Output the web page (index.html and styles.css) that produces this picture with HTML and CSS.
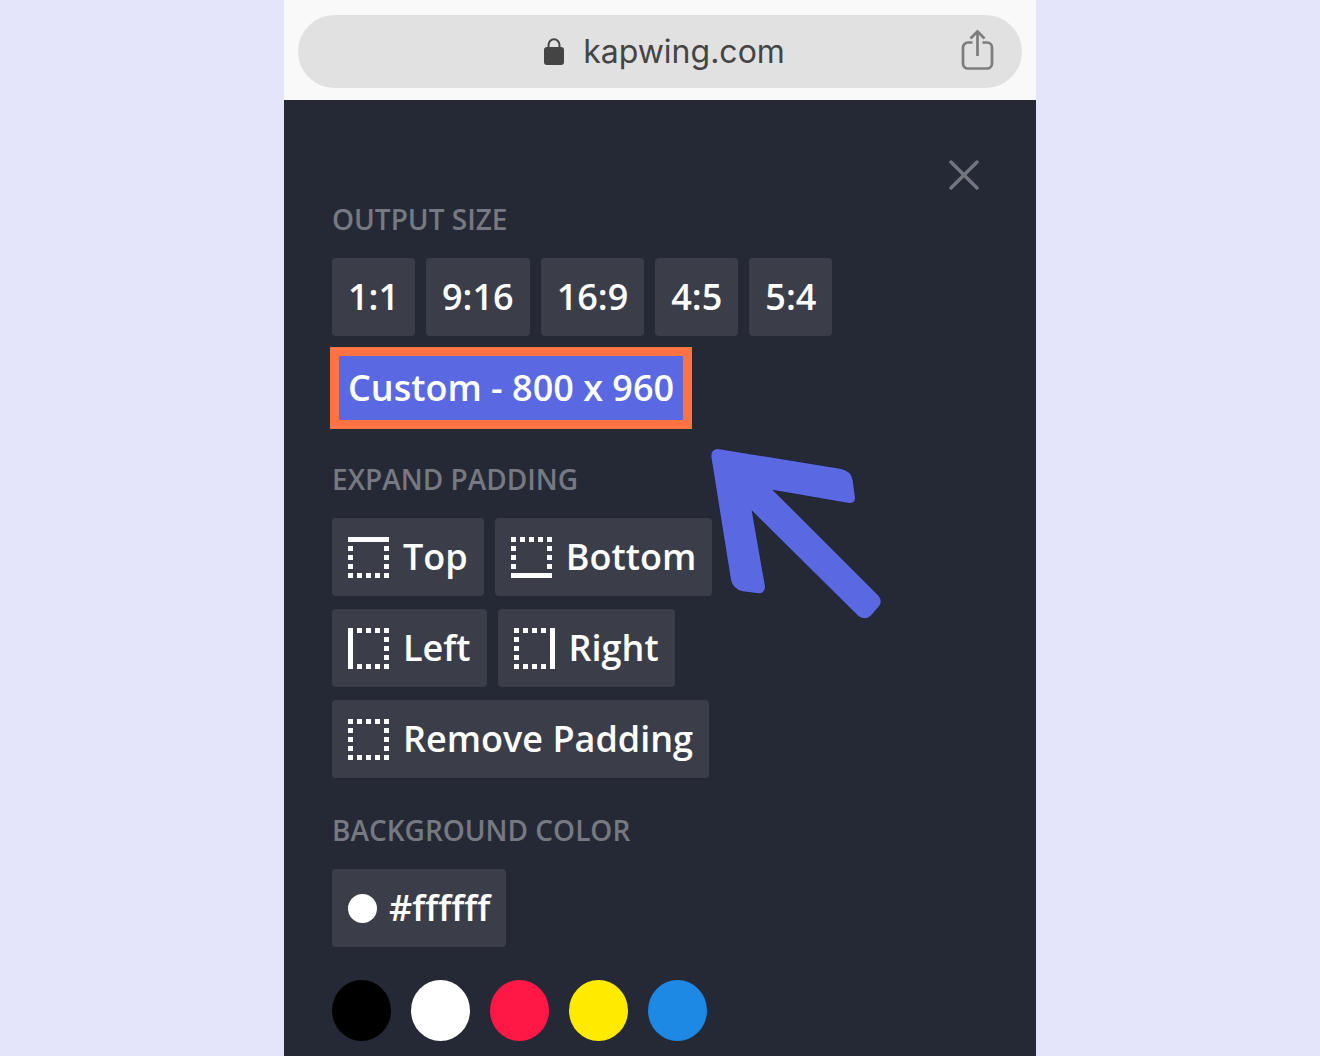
FILE: index.html
```html
<!DOCTYPE html>
<html lang="en">
<head>
<meta charset="utf-8">
<meta name="viewport" content="width=device-width, initial-scale=1">
<title>Kapwing</title>
<link rel="stylesheet" href="styles.css">
</head>
<body>
<svg class="defs" aria-hidden="true">
  <defs>
    <g id="corners">
      <path d="M0 0h5v5H0zM36 0h5v5h-5zM0 36h5v5H0zM36 36h5v5h-5z"/>
    </g>
    <path id="dots-h" d="M9 0h5v5H9zM18 0h5v5h-5zM27 0h5v5h-5z"/>
    <path id="dots-v" d="M0 9h5v5H0zM0 18h5v5H0zM0 27h5v5H0z"/>
  </defs>
</svg>
<div class="phone">
  <header class="browser">
    <div class="address">
      <button class="url" type="button">
        <svg class="lock" viewBox="0 0 22 28" aria-hidden="true">
          <path d="M5.500 10V7a5.500 5.700 0 0 1 11 0v3" fill="none" stroke="currentColor" stroke-width="2"/>
          <rect x="1" y="9" width="20" height="18" rx="3" fill="currentColor"/>
        </svg>
        <span>kapwing.com</span>
      </button>
      <button class="share" type="button" aria-label="Share">
        <svg viewBox="0 0 34 42" fill="none" stroke="currentColor" stroke-width="2.700" aria-hidden="true">
          <path d="M12.500 13.500H8a5 5 0 0 0-5 5v16a5 5 0 0 0 5 5h19a5 5 0 0 0 5-5v-16a5 5 0 0 0-5-5h-4.500M17.500 27V3M10.500 9.500l7-7 7 7"/>
        </svg>
      </button>
    </div>
  </header>
  <main class="panel">
    <button class="close" type="button" aria-label="Close">
      <svg viewBox="0 0 30 30" fill="none" stroke="currentColor" stroke-width="3.500" stroke-linecap="round" aria-hidden="true"><path d="M2 2l26 26M28 2L2 28"/></svg>
    </button>
    <section>
      <h2>OUTPUT SIZE</h2>
      <div class="rows">
        <div class="row">
          <button class="chip" type="button">1:1</button>
          <button class="chip" type="button">9:16</button>
          <button class="chip" type="button">16:9</button>
          <button class="chip" type="button">4:5</button>
          <button class="chip" type="button">5:4</button>
        </div>
        <div class="row">
          <button class="chip selected" type="button">Custom - 800 x 960</button>
        </div>
      </div>
    </section>
    <section>
      <h2>EXPAND PADDING</h2>
      <div class="rows">
        <div class="row">
          <button class="chip" type="button"><svg class="icon" viewBox="0 0 41 41" aria-hidden="true"><use href="#corners"/><path d="M0 0h41v5H0z"/><use href="#dots-v"/><use href="#dots-v" x="36"/><use href="#dots-h" y="36"/></svg>Top</button>
          <button class="chip" type="button"><svg class="icon" viewBox="0 0 41 41" aria-hidden="true"><use href="#corners"/><path d="M0 36h41v5H0z"/><use href="#dots-v"/><use href="#dots-v" x="36"/><use href="#dots-h"/></svg>Bottom</button>
        </div>
        <div class="row">
          <button class="chip" type="button"><svg class="icon" viewBox="0 0 41 41" aria-hidden="true"><use href="#corners"/><path d="M0 0h5v41H0z"/><use href="#dots-v" x="36"/><use href="#dots-h"/><use href="#dots-h" y="36"/></svg>Left</button>
          <button class="chip" type="button"><svg class="icon" viewBox="0 0 41 41" aria-hidden="true"><use href="#corners"/><path d="M36 0h5v41h-5z"/><use href="#dots-v"/><use href="#dots-h"/><use href="#dots-h" y="36"/></svg>Right</button>
        </div>
        <div class="row">
          <button class="chip" type="button"><svg class="icon" viewBox="0 0 41 41" aria-hidden="true"><use href="#corners"/><use href="#dots-v"/><use href="#dots-v" x="36"/><use href="#dots-h"/><use href="#dots-h" y="36"/></svg>Remove Padding</button>
        </div>
      </div>
    </section>
    <section>
      <h2>BACKGROUND COLOR</h2>
      <div class="rows">
        <div class="row">
          <button class="chip hex" type="button"><span class="dot"></span>#ffffff</button>
        </div>
      </div>
      <div class="swatches">
        <button class="swatch black" type="button" aria-label="Black"></button>
        <button class="swatch white" type="button" aria-label="White"></button>
        <button class="swatch red" type="button" aria-label="Red"></button>
        <button class="swatch yellow" type="button" aria-label="Yellow"></button>
        <button class="swatch blue" type="button" aria-label="Blue"></button>
      </div>
    </section>
  </main>
  <svg class="pointer" viewBox="60 50 519 519" aria-hidden="true">
    <path d="M84 56L450 115Q484 121 488 150L495 203Q495 219 477 218L247 178L566 497Q578 513 567 528L542 556Q526 570 506 558L185 240L225 468Q225 489 205 489L158 483Q130 477 123 449L64 79Q63 56 84 56Z"/>
  </svg>
</div>
</body>
</html>
```
FILE: styles.css
```css
* {
  box-sizing: border-box;
}

body {
  margin: 0;
  background: #e4e5fb;
  font-family: "Open Sans", "Noto Sans", sans-serif;
}

button {
  margin: 0;
  padding: 0;
  border: 0;
  background: none;
  color: inherit;
  font: inherit;
  cursor: pointer;
}

svg {
  display: block;
}

.defs {
  display: none;
}

.phone {
  position: relative;
  display: flex;
  flex-direction: column;
  max-width: 752px;
  min-height: 100vh;
  margin: 0 auto;
  background: #252935;
}

.browser {
  padding: 15px 14px 12px;
  background: #f9f9f9;
}

.address {
  display: grid;
  grid-template-columns: 1fr auto 1fr;
  align-items: center;
  height: 73px;
  padding: 0 28px 0 36px;
  border-radius: 37px;
  background: #e1e1e1;
}

.url {
  display: flex;
  grid-column: 2;
  align-items: center;
  gap: 18px;
  color: #444;
  font-family: Inter, "Liberation Sans", sans-serif;
  font-size: 32px;
  line-height: 40px;
}

.lock {
  width: 22px;
  height: 28px;
}

.share {
  justify-self: end;
  padding-bottom: 4px;
  color: #7d7d7d;
}

.share svg {
  width: 34px;
  height: 42px;
}

.panel {
  display: flex;
  flex-direction: column;
  padding: 60px 48px 14px;
  color: #fff;
}

.close {
  align-self: flex-end;
  margin: 0 9px 10px 0;
  color: #73767f;
}

.close svg {
  width: 30px;
  height: 30px;
}

h2 {
  margin: 0 0 20px;
  color: #767982;
  font-size: 28px;
  font-weight: 600;
  line-height: 38px;
}

section + section {
  margin-top: 33px;
}

.rows {
  display: flex;
  flex-direction: column;
  gap: 13px;
}

.row {
  display: flex;
  flex-wrap: wrap;
  gap: 11px;
}

.chip {
  display: flex;
  align-items: center;
  gap: 14px;
  height: 78px;
  padding: 0 16px;
  border-radius: 4px;
  background: #3b3e49;
  font-size: 36px;
  font-weight: 600;
  line-height: 48px;
}

.selected {
  border-radius: 0;
  outline: 9px solid #ff7243;
  outline-offset: -7px;
  background: #5a69e1;
}

.icon {
  width: 41px;
  height: 41px;
  fill: #fff;
}

.hex {
  gap: 12px;
}

.dot {
  width: 29px;
  height: 29px;
  border-radius: 50%;
  background: #fff;
}

.swatches {
  display: flex;
  flex-wrap: wrap;
  gap: 20px;
  margin-top: 33px;
}

.swatch {
  width: 59px;
  height: 61px;
  border-radius: 50%;
}

.black { background: #000; }
.white { background: #fff; }
.red { background: #ff1845; }
.yellow { background: #ffea00; }
.blue { background: #1e88e5; }

.pointer {
  position: absolute;
  top: 447px;
  left: 426px;
  width: 173px;
  height: 173px;
  fill: #5a69e1;
  stroke: #1b1e3a;
  stroke-width: 3px;
  paint-order: stroke;
}
```
